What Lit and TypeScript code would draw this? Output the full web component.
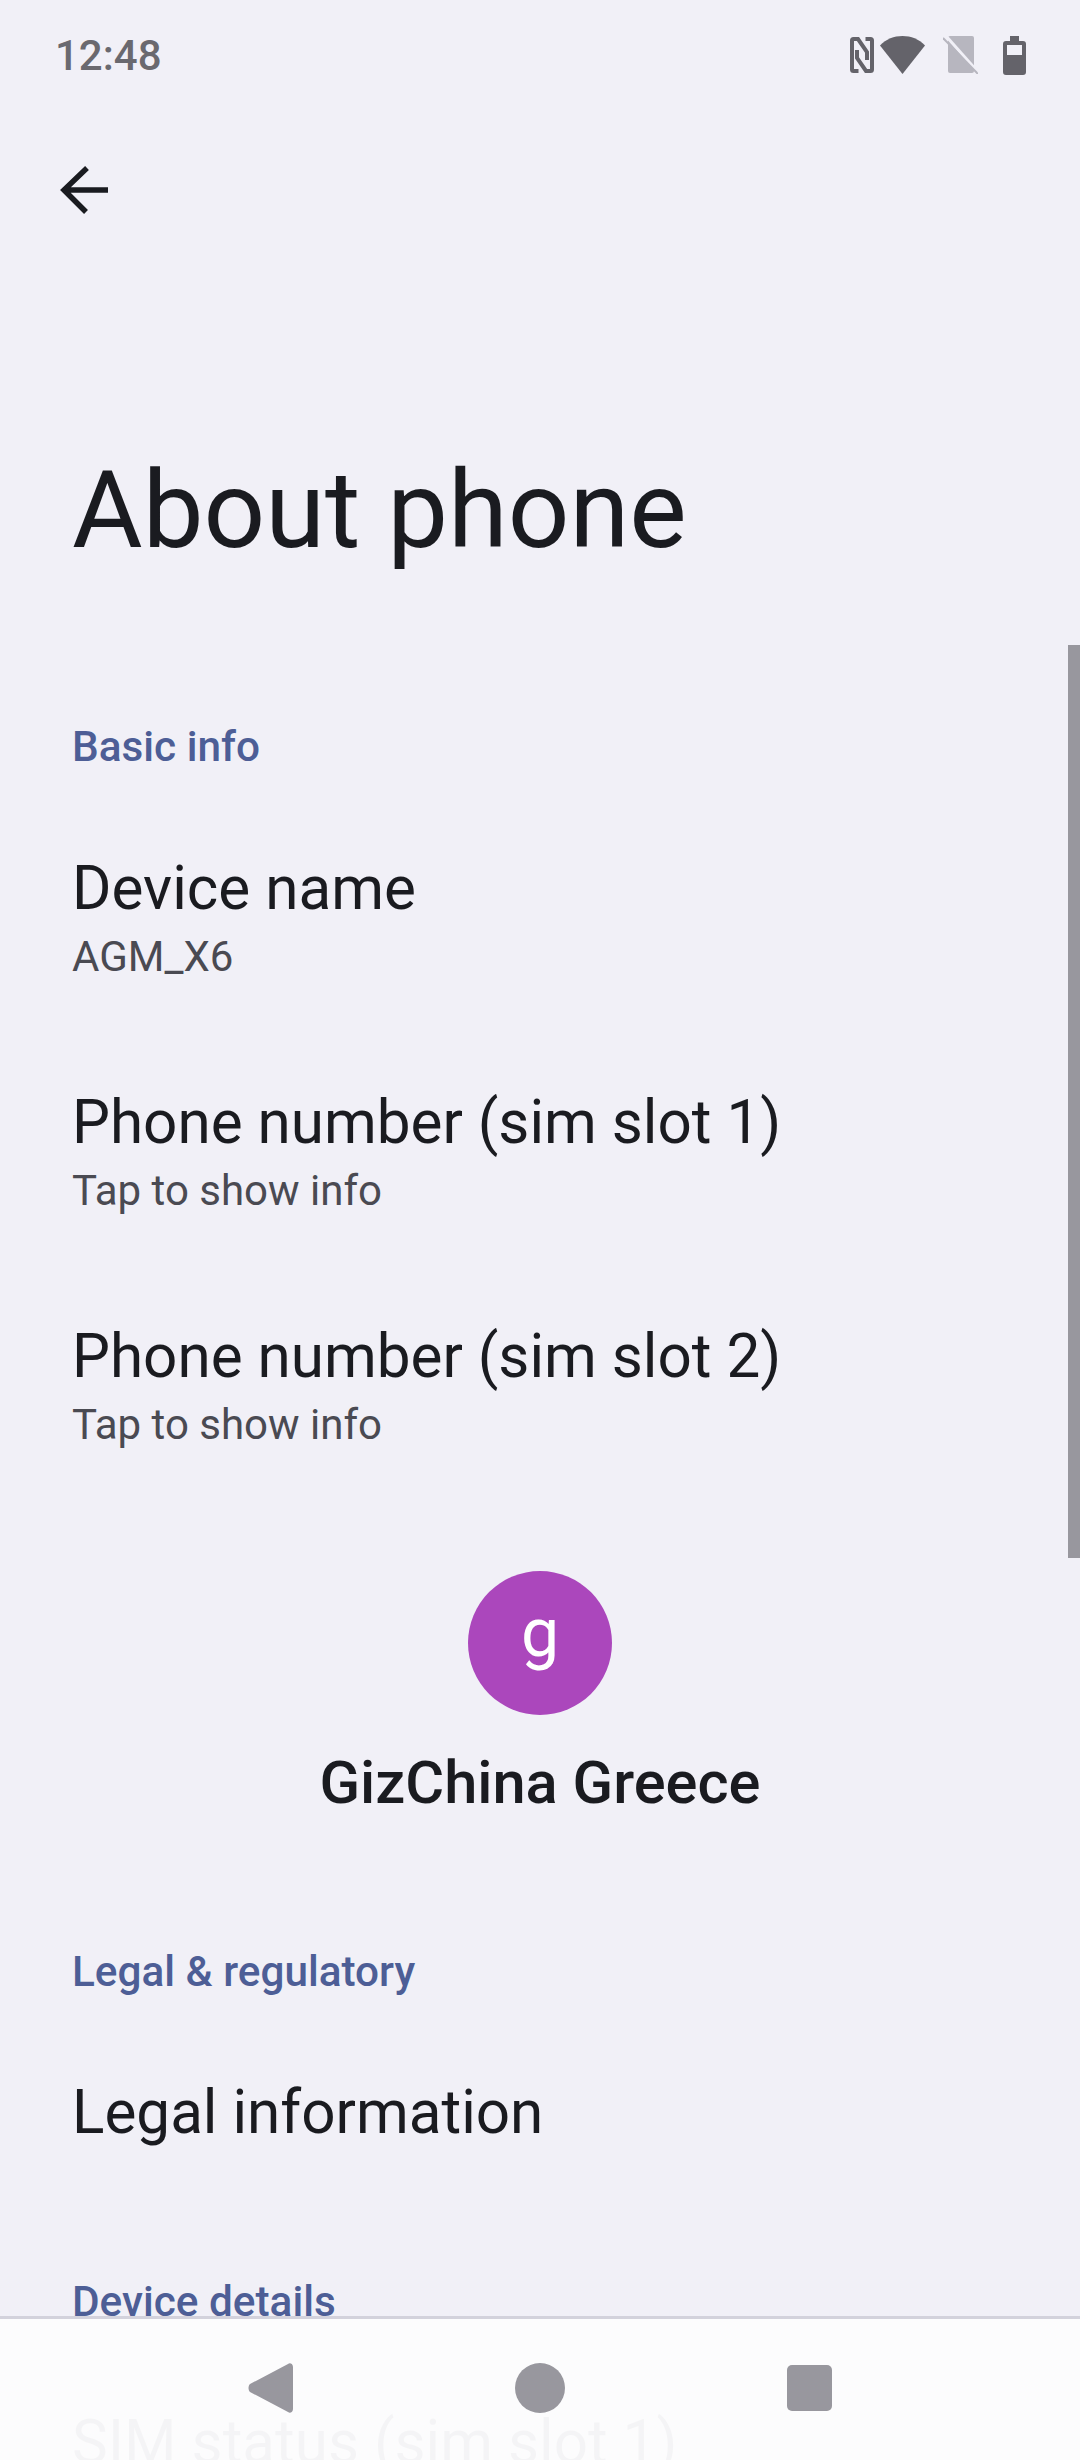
import { LitElement, html, css, svg } from 'lit';
import { customElement } from 'lit/decorators.js';

// status bar icons
const nfcIcon = svg`<path d="M8.500 34H3.500a1.500 1.500 0 0 1-1.500-1.500V3.500A1.500 1.500 0 0 1 3.500 2H8L17 15v8" /><path d="M15.500 2h5A1.500 1.500 0 0 1 22 3.500v29a1.500 1.500 0 0 1-1.500 1.500H16L7 21v-8" />`;

@customElement('app-root')
export class AppRoot extends LitElement {
  static styles = css`
    :host {
      display: block;
      position: relative;
      width: 1080px;
      height: 2460px;
      overflow: hidden;
      background: #f1f0f7;
      color: #1a1b20;
      font-family: Roboto, "Liberation Sans", sans-serif;
    }
    .status {
      height: 110px;
      display: flex;
      align-items: center;
      justify-content: space-between;
      padding: 0 54px 0 55px;
      box-sizing: border-box;
    }
    .time {
      font-size: 42px;
      font-weight: 500;
      color: #6a696f;
    }
    .status-icons {
      display: flex;
      align-items: center;
    }
    .status-icons svg {
      display: block;
    }
    .toolbar {
      height: 110px;
      margin-top: 25px;
      padding-left: 60px;
      display: flex;
      align-items: center;
    }
    h1 {
      margin: 0;
      padding: 207px 0 0 72px;
      font-size: 108.300px;
      line-height: 116px;
      font-weight: 400;
    }
    .section {
      margin: 0 0 28px;
      padding-left: 72px;
      font-size: 42.300px;
      line-height: 50px;
      font-weight: 500;
      color: #4d5e96;
    }
    .basic { margin-top: 154px; }
    .legal { margin-top: 129px; }
    .details { margin-top: 76px; }
    .item {
      padding-left: 72px;
      display: flex;
      flex-direction: column;
      justify-content: center;
    }
    .two { height: 234px; }
    .one { height: 176px; }
    .item-title {
      font-size: 60.200px;
      line-height: 80px;
    }
    .item-sub {
      font-size: 42px;
      line-height: 56px;
      color: #4a4a52;
    }
    .profile {
      display: flex;
      flex-direction: column;
      align-items: center;
      margin-top: 69px;
    }
    .avatar {
      width: 144px;
      height: 144px;
      box-sizing: border-box;
      border-radius: 50%;
      background: #ab47bc;
      color: #fff;
      display: flex;
      align-items: center;
      justify-content: center;
      font-size: 68px;
      line-height: 1;
      padding-bottom: 20px;
    }
    .profile-name {
      font-size: 59.600px;
      font-weight: 500;
      line-height: 70px;
      margin-top: 33px;
    }
    .scrollbar {
      position: absolute;
      top: 645px;
      right: 0;
      width: 12px;
      height: 913px;
      background: #98979e;
    }
    .nav {
      position: absolute;
      left: 0;
      right: 0;
      top: 2316px;
      bottom: 0;
      box-sizing: border-box;
      border-top: 3px solid #d3d2dc;
      background: rgba(252, 252, 253, 0.97);
      display: flex;
      justify-content: center;
      align-items: flex-start;
      gap: 222px;
      padding-top: 44px;
    }
    .nav svg {
      display: block;
      fill: #98979e;
    }
  `;

  render() {
    return html`
      <div class="status">
        <span class="time">12:48</span>
        <div class="status-icons">
          <svg width="24" height="36" viewBox="0 0 24 36" fill="none" stroke="#64636a" stroke-width="4">${nfcIcon}</svg>
          <svg width="45" height="38" viewBox="0 0 45 38" fill="#64636a" style="margin-left:6px"><path d="M22.500 0C31 0 39 3 45 9.500L22.500 38 0 9.500C6 3 14 0 22.500 0z" /></svg>
          <svg width="35" height="38" viewBox="0 0 35 38" style="margin-left:18px"><path fill="#b7b6bf" d="M7 0h22a2 2 0 0 1 2 2v33a2 2 0 0 1-2 2H7a2 2 0 0 1-2-2V2a2 2 0 0 1 2-2z" /><path stroke="#f1f0f7" stroke-width="3" d="M3 0l32 36" /><path stroke="#b7b6bf" stroke-width="2" d="M0 2l35 36" /></svg>
          <svg width="23" height="39" viewBox="0 0 23 39" fill="#64636a" style="margin-left:25px"><path fill-rule="evenodd" d="M7 0h9v5h4a3 3 0 0 1 3 3v28a3 3 0 0 1-3 3H3a3 3 0 0 1-3-3V8a3 3 0 0 1 3-3h4zM4 9v10h15V9z" /></svg>
        </div>
      </div>
      <div class="toolbar">
        <svg width="48" height="48" viewBox="0 0 48 48" fill="none" stroke="#1a1b20" stroke-width="5.500">
          <path d="M48 24H4M27 2L4 24l22 22" />
        </svg>
      </div>
      <h1>About phone</h1>
      <p class="section basic">Basic info</p>
      <div class="item two">
        <span class="item-title">Device name</span>
        <span class="item-sub">AGM_X6</span>
      </div>
      <div class="item two">
        <span class="item-title">Phone number (sim slot 1)</span>
        <span class="item-sub">Tap to show info</span>
      </div>
      <div class="item two">
        <span class="item-title">Phone number (sim slot 2)</span>
        <span class="item-sub">Tap to show info</span>
      </div>
      <div class="profile">
        <div class="avatar">g</div>
        <div class="profile-name">GizChina Greece</div>
      </div>
      <p class="section legal">Legal &amp; regulatory</p>
      <div class="item one"><span class="item-title">Legal information</span></div>
      <p class="section details">Device details</p>
      <div class="item one"><span class="item-title">SIM status (sim slot 1)</span></div>
      <div class="scrollbar"></div>
      <div class="nav">
        <svg width="45" height="50" viewBox="0 0 45 50"><path d="M45 4v42c0 3-3 5-5 3L2 29c-2-2-2-6 0-8L40 1c2-2 5 0 5 3z" /></svg>
        <svg width="50" height="50" viewBox="0 0 50 50"><circle cx="25" cy="25" r="25" /></svg>
        <svg width="45" height="46" viewBox="0 0 45 46" style="margin-top:2px"><rect width="45" height="46" rx="5" /></svg>
      </div>
    `;
  }
}
